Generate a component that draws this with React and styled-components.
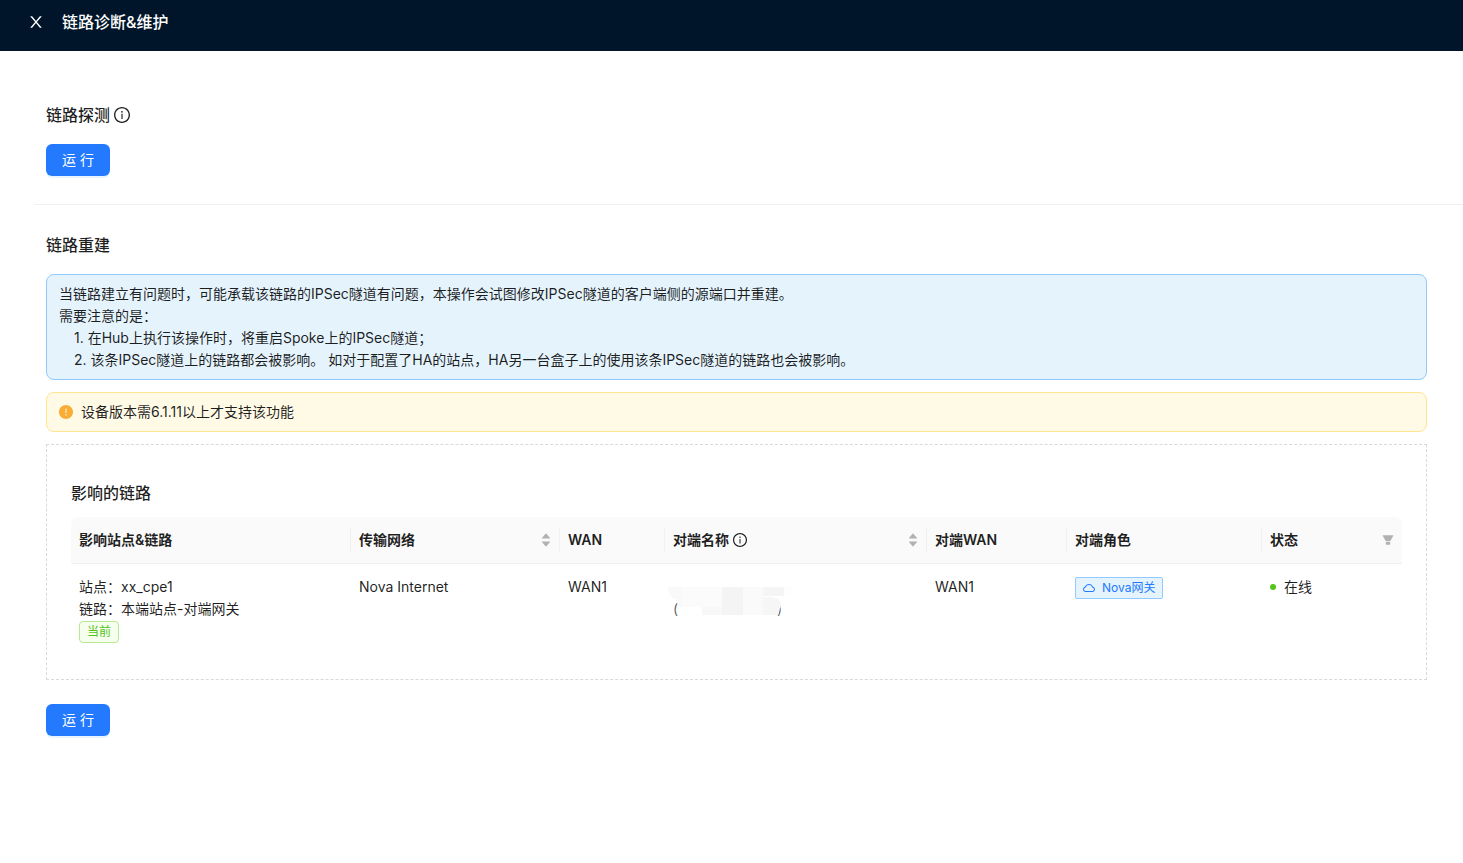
import React from 'react';
import styled, { createGlobalStyle } from 'styled-components';
import {
  AiOutlineInfoCircle,
  AiFillExclamationCircle,
  AiOutlineCloud,
  AiFillCaretUp,
  AiFillCaretDown,
  AiFillFilter,
} from 'react-icons/ai';

const GlobalStyle = createGlobalStyle`
  * {
    box-sizing: border-box;
  }

  body {
    margin: 0;
    background: #fff;
    color: rgba(0, 0, 0, 0.88);
    font-family: Inter, 'Noto Sans CJK SC', sans-serif;
    font-size: 14px;
    line-height: 22px;
  }

  svg {
    display: block;
    flex: none;
  }
`;

const Header = styled.header`
  display: flex;
  align-items: center;
  gap: 18px;
  padding: 10px 28px 17px;
  background: #001529;
  color: #fff;
`;

const CloseButton = styled.button`
  padding: 0;
  border: none;
  background: transparent;
  color: inherit;
  font-size: 16px;
  cursor: pointer;
`;

const HeaderTitle = styled.h1`
  margin: 0;
  font-size: 16px;
  font-weight: 500;
  line-height: 24px;
`;

const Content = styled.main`
  padding: 24px 0 24px 34px;
`;

const Section = styled.section`
  padding: 28px 36px 28px 12px;

  & + & {
    border-top: 1px solid #f0f0f0;
  }
`;

const SectionTitle = styled.h2`
  display: flex;
  align-items: center;
  gap: 4px;
  margin: 0 0 17px;
  font-size: 16px;
  font-weight: 500;
  line-height: 24px;
`;

const RunButton = styled.button`
  height: 32px;
  padding: 0 16px;
  border: none;
  border-radius: 6px;
  background: #237aff;
  box-shadow: 0 2px 0 rgba(5, 145, 255, 0.1);
  color: #fff;
  font: inherit;
  cursor: pointer;
`;

const Alert = styled.div`
  display: flex;
  align-items: center;
  gap: 8px;
  margin-bottom: 12px;
  padding: 8px 12px;
  border: 1px solid ${(props) => (props.$warning ? '#ffe58f' : '#91caff')};
  border-radius: 8px;
  background: ${(props) => (props.$warning ? '#fffae6' : '#e5f3fd')};
`;

// trims the empty margin that the icon set keeps around each glyph
const tightBox = { viewBox: '64 64 896 896' };

const InfoIcon = styled(AiOutlineInfoCircle).attrs(tightBox)``;

const CloudIcon = styled(AiOutlineCloud).attrs(tightBox)``;

const FilterIcon = styled(AiFillFilter).attrs(tightBox)``;

const WarningIcon = styled(AiFillExclamationCircle).attrs(tightBox)`
  color: #faad34;
`;

const Steps = styled.ol`
  margin: 0;
  padding: 0 0 0 15px;
  list-style: none;
`;

const LinkPanel = styled.div`
  margin-bottom: 24px;
  padding: 36px 24px 24px;
  border: 1px dashed #d9d9d9;
`;

const PanelTitle = styled.h3`
  margin: 0 0 12px;
  font-size: 16px;
  font-weight: 500;
  line-height: 24px;
`;

const Table = styled.table`
  width: 100%;
  border-collapse: separate;
  border-spacing: 0;
  table-layout: fixed;
`;

const HeadCell = styled.th`
  position: relative;
  padding: 12px 8px;
  border-bottom: 1px solid #f0f0f0;
  background: #fafafa;
  font-weight: 600;
  text-align: left;

  &:first-child {
    border-top-left-radius: 8px;
  }

  &:last-child {
    border-top-right-radius: 8px;
  }

  &:not(:last-child)::after {
    content: '';
    position: absolute;
    top: 12px;
    right: 0;
    bottom: 11px;
    width: 1px;
    background: #f0f0f0;
  }
`;

const HeadContent = styled.div`
  display: flex;
  align-items: center;
  justify-content: space-between;
`;

const HeadLabel = styled.span`
  display: flex;
  align-items: center;
  gap: 4px;
`;

const HeadAction = styled.button`
  display: flex;
  flex-direction: column;
  padding: 0;
  border: none;
  background: transparent;
  color: rgba(0, 0, 0, 0.29);
  font-size: 12px;
  cursor: pointer;
`;

const CaretDown = styled(AiFillCaretDown)`
  margin-top: -4px;
`;

const Cell = styled.td`
  padding: 12px 8px;
  vertical-align: top;
`;

const Tag = styled.span`
  display: flex;
  align-items: center;
  gap: 7px;
  width: max-content;
  height: 22px;
  margin-top: 1px;
  padding: 0 7px;
  border: 1px solid ${(props) => (props.$green ? '#b7eb8f' : '#91caff')};
  border-radius: ${(props) => (props.$green ? '4px' : '2px')};
  background: ${(props) => (props.$green ? '#f6ffed' : '#e5f3fd')};
  color: ${(props) => (props.$green ? '#52c41a' : '#237aff')};
  font-size: 12px;
  line-height: 20px;
`;

const Status = styled.span`
  display: flex;
  align-items: center;
  gap: 8px;

  &::before {
    content: '';
    width: 6px;
    height: 6px;
    border-radius: 50%;
    background: #52c41a;
  }
`;

const MaskedName = styled.div`
  position: relative;
  display: flex;
  justify-content: space-between;
  width: 109px;
  padding-top: 22px;
  color: rgba(0, 0, 0, 0.65);
`;

const Mosaic = styled.svg`
  position: absolute;
  top: 11px;
  left: -5px;
`;

const columns = [
  { title: '影响站点&链路', width: 280 },
  { title: '传输网络', width: 209, sortable: true },
  { title: 'WAN', width: 105 },
  { title: '对端名称', width: 262, sortable: true, info: true },
  { title: '对端WAN', width: 140 },
  { title: '对端角色', width: 195 },
  { title: '状态', width: 140, filterable: true },
];

const CloseIcon = () => (
  <svg width="1em" height="1em" viewBox="64 64 896 896" fill="currentColor">
    <path d="M563.8 512l262.5-312.9c4.4-5.2.7-13.1-6.1-13.1h-79.8c-4.7 0-9.2 2.1-12.3 5.7L511.6 449.8 295.1 191.7c-3-3.6-7.5-5.7-12.3-5.7H203c-6.8 0-10.5 7.9-6.1 13.1L459.4 512 196.9 824.9A7.95 7.95 0 0 0 203 838h79.8c4.7 0 9.2-2.1 12.3-5.7l216.5-258.1 216.5 258.1c3 3.6 7.5 5.7 12.3 5.7h79.8c6.8 0 10.5-7.9 6.1-13.1L563.8 512z" />
  </svg>
);

const App = () => {
  return (
    <>
      <GlobalStyle />
      <Header>
        <CloseButton aria-label="关闭">
          <CloseIcon />
        </CloseButton>
        <HeaderTitle>链路诊断&维护</HeaderTitle>
      </Header>
      <Content>
        <Section>
          <SectionTitle>
            链路探测
            <InfoIcon />
          </SectionTitle>
          <RunButton>运 行</RunButton>
        </Section>
        <Section>
          <SectionTitle>链路重建</SectionTitle>
          <Alert>
            <div>
              <div>
                当链路建立有问题时，可能承载该链路的IPSec隧道有问题，本操作会试图修改IPSec隧道的客户端侧的源端口并重建。
              </div>
              <div>需要注意的是：</div>
              <Steps>
                <li>1. 在Hub上执行该操作时，将重启Spoke上的IPSec隧道；</li>
                <li>
                  2. 该条IPSec隧道上的链路都会被影响。
                  如对于配置了HA的站点，HA另一台盒子上的使用该条IPSec隧道的链路也会被影响。
                </li>
              </Steps>
            </div>
          </Alert>
          <Alert $warning>
            <WarningIcon />
            设备版本需6.1.11以上才支持该功能
          </Alert>
          <LinkPanel>
            <PanelTitle>影响的链路</PanelTitle>
            <Table>
              <colgroup>
                {columns.map((col) => (
                  <col key={col.title} width={col.width} />
                ))}
              </colgroup>
              <thead>
                <tr>
                  {columns.map((col) => (
                    <HeadCell key={col.title}>
                      <HeadContent>
                        <HeadLabel>
                          {col.title}
                          {col.info && <InfoIcon />}
                        </HeadLabel>
                        {col.sortable && (
                          <HeadAction aria-label="排序">
                            <AiFillCaretUp />
                            <CaretDown />
                          </HeadAction>
                        )}
                        {col.filterable && (
                          <HeadAction aria-label="筛选">
                            <FilterIcon />
                          </HeadAction>
                        )}
                      </HeadContent>
                    </HeadCell>
                  ))}
                </tr>
              </thead>
              <tbody>
                <tr>
                  <Cell>
                    <div>站点：xx_cpe1</div>
                    <div>链路：本端站点-对端网关</div>
                    <Tag $green>当前</Tag>
                  </Cell>
                  <Cell>Nova Internet</Cell>
                  <Cell>WAN1</Cell>
                  <Cell>
                    <MaskedName>
                      <span>(</span>
                      <span>)</span>
                      <Mosaic width="126" height="30" viewBox="0 0 126 30">
                        <path d="M3 10h112v8h-6v10h-6V18H14v-2H3z" fill="#fff" />
                        <path d="M0 0h14v20H9q3-7-1-8Q0 10 0 0z" fill="#f9f9f9" />
                        <path d="M14 0h40v20H14z" fill="#fbfbfb" />
                        <path d="M34 20h20v8H34z" fill="#f8f8f8" />
                        <path d="M54 0h21v28H54z" fill="#f4f4f4" />
                        <path d="M75 0h20v28H75z" fill="#fafafa" />
                        <path d="M95 0h21v9H95z" fill="#f5f5f5" />
                        <path d="M116 0h9q-1 6-9 7z" fill="#fdfdfd" />
                        <path d="M95 10h8q10 1 10 8l-3 10H95z" fill="#f6f6f6" />
                      </Mosaic>
                    </MaskedName>
                  </Cell>
                  <Cell>WAN1</Cell>
                  <Cell>
                    <Tag>
                      <CloudIcon />
                      Nova网关
                    </Tag>
                  </Cell>
                  <Cell>
                    <Status>在线</Status>
                  </Cell>
                </tr>
              </tbody>
            </Table>
          </LinkPanel>
          <RunButton>运 行</RunButton>
        </Section>
      </Content>
    </>
  );
};

export default App;
